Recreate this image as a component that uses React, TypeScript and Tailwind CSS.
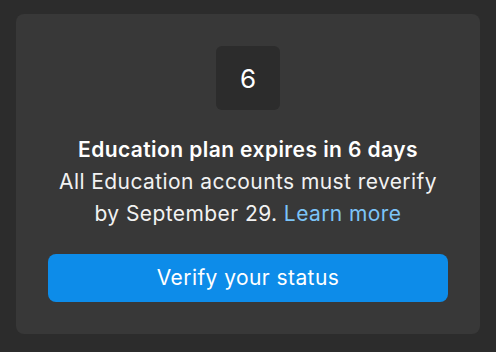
export default function App() {
  return (
    <div
      className="w-[496px] h-[352px] bg-[#2c2c2c] pt-[14px] pl-4 pr-4"
      style={{ fontFamily: "Inter, 'Noto Sans', sans-serif" }}
    >
      <div className="w-[464px] h-[320px] bg-[#383838] rounded-lg p-8 flex flex-col items-center">
        <div className="w-16 h-16 rounded-md bg-[#2c2c2c] flex items-center justify-center text-white text-[26px]">
          6
        </div>
        <div className="mt-6 text-center text-[21px] tracking-[0.02em] leading-8 text-[#f2f2f2] whitespace-nowrap">
          <div className="font-semibold text-white">Education plan expires in 6 days</div>
          <div>All Education accounts must reverify</div>
          <div>
            by September 29. <span className="text-[#7cc4f8]">Learn more</span>
          </div>
        </div>
        <button className="mt-6 w-full h-12 rounded-lg bg-[#0d8ce9] text-white text-[21px] tracking-[0.02em]">
          Verify your status
        </button>
      </div>
    </div>
  );
}
